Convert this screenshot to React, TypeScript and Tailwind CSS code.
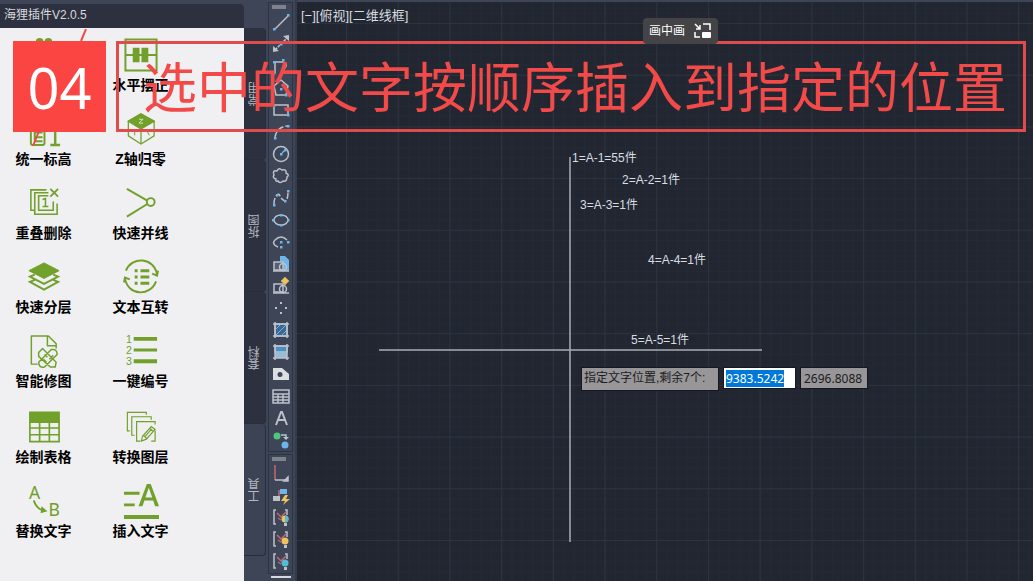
import { useEffect, useRef, type ReactNode } from "react";

type Tool = {
  id: string;
  label: string;
  icon: ReactNode;
};

const G = "#71a02b";
const W = "#bcc2cb";
const B = "#6cb6ea";

const mainTools: Tool[] = [
  {
    id: "align",
    label: "",
    icon: (
      <g fill={G}>
        <circle cx="14" cy="5" r="4" />
        <circle cx="23" cy="5" r="4" />
        <path d="M8 12h20v18H8z" />
      </g>
    ),
  },
  {
    id: "level",
    label: "水平摆正",
    icon: (
      <g fill="none" stroke={G} strokeWidth="2">
        <path d="M2.5 2.5h32v32h-32zM2 6h33M2 18.5h33" />
        <path d="M11 12h5v13h-5zM20 12h5v13h-5z" fill={G} />
      </g>
    ),
  },
  {
    id: "elevation",
    label: "统一标高",
    icon: (
      <g fill="none" stroke={G} strokeWidth="2">
        <path d="M5 6v27q0 2 2 2h10q2 0 2-2V16M9 22h8M9 27h8M9 31h8M9 18v13" />
        <path d="M26 20l4-3v18M25 35h10" strokeWidth="2.5" />
      </g>
    ),
  },
  {
    id: "zero-z",
    label: "Z轴归零",
    icon: (
      <g fill="none" stroke={G} strokeWidth="1.3">
        <path d="M18.500 3 5.500 10.500v15L18.500 34l13.500-8.500v-15z" />
        <path d="M18.500 3 5.500 10.500l13 8 13.500-8z" fill={G} />
        <path d="M18.500 18.500V34" />
        <path d="M12 21v4M25 21l2 4" strokeWidth="1" />
        <path d="M16.500 8.500h4l-4 4h4" stroke="#d8e8be" strokeWidth="1" />
      </g>
    ),
  },
  {
    id: "dedupe",
    label: "重叠删除",
    icon: (
      <g fill="none" stroke={G} strokeWidth="1.600">
        <path d="M21 5H5v21h4M23 8H9v22h23V19M23 11H13v15h15V17" />
        <path d="M25 4l8 8M33 4l-8 8" strokeWidth="1.800" />
        <path d="M17 15l3-1v8M17 22h6" />
      </g>
    ),
  },
  {
    id: "merge-lines",
    label: "快速并线",
    icon: (
      <g fill="none" stroke={G} strokeWidth="2">
        <path d="M4 4l21 12M4 32.500l21-13" />
        <circle cx="28.500" cy="17.500" r="4" />
      </g>
    ),
  },
  {
    id: "layers",
    label: "快速分层",
    icon: (
      <g fill="none" stroke={G} strokeWidth="2">
        <path d="M18.500 4 3 12l15.500 8L34 12z" fill={G} strokeWidth="1" />
        <path d="M9 16l-5 2 14.500 7.500L33 18l-5-2M9 21.500l-5 2 14.500 8L33 23.500l-5-2" />
      </g>
    ),
  },
  {
    id: "text-convert",
    label: "文本互转",
    icon: (
      <g fill="none" stroke={G} strokeWidth="2">
        <path d="M3 12C9-3 32-2 35 16M34 23C28 39 5 38 2 20" />
        <path d="M30 15l5 2 1-5M7 21l-5-2-1 5" />
        <path d="M12 12h3M18 12h9M12 18.500h3M18 18.500h9M12 25h3M18 25h9" strokeWidth="3" />
      </g>
    ),
  },
  {
    id: "smart-fix",
    label: "智能修图",
    icon: (
      <g fill="none" stroke={G} strokeWidth="1.500" strokeLinejoin="round">
        <path d="M12 32H5.500V3H23l8 8v5M22 3v10h9" />
        <path d="M13 20l4-4 14 14-1 5h-5L13 24zM26 17q6-1 6 5L19 35q-6 1-6-5zM22 25l-3-3M24 27l4-4M18 27l3 3" />
      </g>
    ),
  },
  {
    id: "numbering",
    label: "一键编号",
    icon: (
      <g fill={G}>
        <path d="M11 4h24v4H11zM11 16h24v3H11zM11 27h24v4H11z" />
        <g fontSize="11" fontFamily="Liberation Sans, sans-serif">
          <text x="3" y="10">1</text>
          <text x="3" y="22">2</text>
          <text x="3" y="33">3</text>
        </g>
      </g>
    ),
  },
];

const drawTools: Tool[] = [
  {
    id: "table",
    label: "绘制表格",
    icon: (
      <g fill="none" stroke={G} strokeWidth="1.700">
        <path d="M4 3.500h30v10H4z" fill={G} />
        <path d="M4 13v20.500h30V13M4 19.500h30M4 26.500h30M14 13v20M24 13v20" />
      </g>
    ),
  },
  {
    id: "convert-layer",
    label: "转换图层",
    icon: (
      <g fill="none" stroke={G} strokeWidth="1.200">
        <path d="M24 6V3.500H4.500v19H7M29 11V8H9v19h3M33 22v11h-4M18 33h-4V13h19v3" />
        <path d="M19 33l1-5 9-10 4 3-9 10zM21 27l4 4M28 20l3 3M23 28l6-7" />
      </g>
    ),
  },
  {
    id: "replace-text",
    label: "替换文字",
    icon: (
      <g fill={G}>
        <g fontSize="18" fontFamily="Noto Sans, sans-serif">
          <text x="3" y="16">A</text>
          <text x="23" y="34">B</text>
        </g>
        <path d="M8 18q3 9 10 10" fill="none" stroke={G} strokeWidth="2" />
        <path d="M16 24l6 5-7 2z" />
      </g>
    ),
  },
  {
    id: "insert-text",
    label: "插入文字",
    icon: (
      <g fill={G}>
        <path d="M1 9h16v3H1zM1 21h11v3H1zM1 33h36v4H1z" />
        <path d="M16 24 24.500 1h4L37 24h-4l-2-6h-9l-2 6zM23 15h7l-3.500-10z" fillRule="evenodd" />
      </g>
    ),
  },
];

const dots = (points: number[][]) =>
  points.map(([x, y]) => (
    <rect key={`${x}-${y}`} x={x - 1} y={y - 1} width="2.500" height="2.500" fill={B} stroke="none" />
  ));

const dimension = (color: string, half?: string) => (
  <>
    <path d="M5 2H3v14h2M14 2h2v5" />
    <path d="M6 5l4 4 5-5M7 10l3 2" stroke="#c06a70" />
    <circle cx="14" cy="11" r="3.500" fill={color} stroke="none" />
    {half && <path d="M14 7.500a3.500 3.500 0 0 1 0 7z" fill={half} stroke="none" />}
    <path d="M13 15h3v3h-3z" fill={W} stroke="none" />
  </>
);

const drawBar: Tool[] = [
  { id: "line", label: "直线", icon: <><path d="M4 17 17 4" />{dots([[3, 17], [17, 3]])}</> },
  { id: "xline", label: "构造线", icon: <><path d="M4 16 16 4" strokeDasharray="3 1" /><path d="M2 18v-6l6 5zM18 1v6l-6-5z" fill={W} stroke="none" />{dots([[10, 10]])}</> },
  { id: "pline", label: "多段线", icon: <><path d="M4 17V6h8q6 2 1 7" />{dots([[3, 17], [3, 6], [12, 4]])}</> },
  { id: "polygon", label: "多边形", icon: <><path d="M10 2l7 6-2 9H5L3 8z" />{dots([[10, 11], [15, 17]])}</> },
  { id: "rect", label: "矩形", icon: <><path d="M3 5h14v10H3z" />{dots([[3, 5], [17, 15]])}</> },
  { id: "arc", label: "圆弧", icon: <><path d="M4 15Q6 5 16 4" strokeDasharray="6 2" />{dots([[4, 16], [8, 8], [17, 4]])}</> },
  { id: "circle", label: "圆", icon: <><circle cx="10" cy="10" r="7.500" />{dots([[10, 10], [14, 6]])}<path d="M11 9l3-3" stroke={B} /></> },
  { id: "cloud", label: "修订云线", icon: <path d="M5 13q-4-1-2-4-2-5 3-4 2-4 5-1 5-1 4 3 4 2 1 4 0 5-4 4-3 3-5 0-3 1-2-2z" /> },
  { id: "spline", label: "样条曲线", icon: <><path d="M3 16q0-6 3-9 2-2 3 1t5 5q3-1 3-9" strokeDasharray="6 2" />{dots([[3, 17], [6, 7], [14, 13], [17, 3]])}</> },
  { id: "ellipse", label: "椭圆", icon: <><ellipse cx="10" cy="10" rx="7" ry="5" />{dots([[2, 10], [17, 10], [10, 5], [10, 15]])}</> },
  { id: "ellipse-arc", label: "椭圆弧", icon: <><path d="M7 15q-7-3-3-7 6-6 12 0" />{dots([[10, 10], [10, 15], [17, 10]])}</> },
  { id: "insert", label: "插入块", icon: <><path d="M9 2h5l4 4v11H9z" fill={B} stroke="none" /><path d="M3 8h9v8H3z" fill="#565f6e" /><circle cx="12" cy="13" r="3.500" /><path d="M2 17h16" /></> },
  { id: "block", label: "创建块", icon: <><path d="M3 8h9v8H3z" /><circle cx="12" cy="13" r="3.500" /><path d="M2 17h16" /><circle cx="14" cy="5" r="3" fill="#efc15f" stroke="none" /><path d="M14 1v8M10 5h8" stroke="#efc15f" /></> },
  { id: "point", label: "点", icon: <path d="M9 5h2M9 15h2M4 10h2M14 10h2" strokeWidth="2" /> },
  { id: "hatch", label: "图案填充", icon: <><path d="M4 4h12v12H4z" fill="#3d6991" /><path d="M4 10l6-6M4 16 16 4M10 16l6-6" stroke={B} strokeWidth="1" /><path d="M4 2v16M16 2v16M2 4h16M2 16h16" /></> },
  { id: "gradient", label: "渐变色", icon: <><path d="M4 4h12v6H4z" fill="#4790c8" /><path d="M4 10h12v6H4z" fill="#9abbd5" stroke="none" /><path d="M4 2v16M16 2v16M2 4h16M2 16h16" /></> },
  { id: "region", label: "面域", icon: <path fillRule="evenodd" d="M2 4h9l7 6v6H2zM9 8a2.500 2.500 0 1 0 0 5 2.500 2.500 0 1 0 0-5z" fill="#dcdee2" stroke="none" /> },
  { id: "grid", label: "表格", icon: <path d="M2 4h16v13H2zM2 8h16M2 11h16M2 14h16M7 8v9M12 8v9" /> },
  { id: "mtext", label: "多行文字", icon: <path d="M5 17 10 4h1l5 13M7 12h7" strokeWidth="2" /> },
  { id: "add", label: "添加选定对象", icon: <><circle cx="6" cy="6" r="3.500" fill="#4fc67c" stroke="none" /><circle cx="14" cy="15" r="3.500" fill={B} stroke="none" /><path d="M10 5h5v4" /><path d="M12 7h6l-3 3z" fill={W} stroke="none" /></> },
];

const constraintBar: Tool[] = [
  { id: "ucs", label: "坐标系", icon: <><path d="M4 1v15" stroke="#c06a70" /><path d="M4 16h13" /><path d="M17 13v4h-4z" fill={W} /></> },
  { id: "auto", label: "自动约束", icon: <><path d="M9 3h7v5H9z" fill={B} stroke="none" /><path d="M2 10h7v5H2z" fill={W} stroke="none" /><path d="M8 10V4" stroke="#c06a70" /><path d="M14 9l-4 6h4l-2 4 7-6h-4l2-4z" fill="#efc15f" stroke="none" /></> },
  { id: "dim-auto", label: "智能标注", icon: dimension("#efc15f", "#54bcd5") },
  { id: "dim-lock", label: "锁定标注", icon: dimension("#efc15f") },
  { id: "dim-view", label: "显示标注", icon: dimension("#54bcd5") },
];

const tabs = ["常用", "拆图", "套料", "工具"];

const annotations = [
  { text: "1=A-1=55件", x: 275, y: 160 },
  { text: "2=A-2=1件", x: 325, y: 182 },
  { text: "3=A-3=1件", x: 283, y: 207 },
  { text: "4=A-4=1件", x: 351, y: 262 },
  { text: "5=A-5=1件", x: 334, y: 342 },
];

function ToolGrid({ tools }: { tools: Tool[] }) {
  return (
    <div className="grid grid-cols-[97px_97px]">
      {tools.map((tool) => (
        <button
          key={tool.id}
          type="button"
          aria-label={tool.label || "对齐"}
          className="flex flex-col items-center gap-0.5"
        >
          <svg viewBox="0 0 37 37" className="size-9 overflow-visible">
            {tool.icon}
          </svg>
          <span className="h-5 text-sm leading-5 font-bold text-black">{tool.label}</span>
        </button>
      ))}
    </div>
  );
}

function Plugin() {
  return (
    <aside className="flex w-[244px] shrink-0 flex-col pt-1">
      <h1 className="h-6 rounded-tr bg-[#2d313f] pl-1 text-xs leading-[22px] text-[#d8dade]">
        海狸插件V2.0.5
      </h1>
      <div className="flex-1 bg-[#f0eff1] pt-[9px]">
        <div className="-ml-[5px] flex flex-col gap-[18px] [&>div]:gap-y-4">
          <ToolGrid tools={mainTools} />
          <ToolGrid tools={drawTools} />
        </div>
      </div>
    </aside>
  );
}

function TabStrip() {
  return (
    <div role="tablist" aria-orientation="vertical" className="flex w-6 shrink-0 flex-col pt-7 pr-0.5">
      {tabs.map((tab) => (
        <button
          key={tab}
          type="button"
          role="tab"
          aria-selected={tab === "工具"}
          className="flex h-[132px] items-center justify-center rounded-r border-r border-b border-[#272d3a] bg-[#2d313f] text-xs text-[#b4b8c0] aria-selected:bg-[#3b4354]"
        >
          <span className="rotate-180 [writing-mode:vertical-rl]">{tab}</span>
        </button>
      ))}
    </div>
  );
}

function ToolBar({ tools }: { tools: Tool[] }) {
  return (
    <div role="toolbar" className="flex flex-col items-center border border-[#2c3342] pt-0.5">
      <div className="mr-1 mb-0.5 h-1 w-3.5 bg-[#7d838e]" />
      {tools.map((tool) => (
        <button
          key={tool.id}
          type="button"
          aria-label={tool.label}
          className="flex h-[22px] w-6 items-center justify-center"
        >
          <svg viewBox="0 0 20 20" className="size-5" fill="none" stroke={W} strokeWidth="1.500">
            {tool.icon}
          </svg>
        </button>
      ))}
    </div>
  );
}

function CoordinatePrompt() {
  const xRef = useRef<HTMLInputElement>(null);

  useEffect(() => {
    xRef.current?.focus();
    xRef.current?.select();
  }, []);

  return (
    <div className="absolute top-[365px] left-[284px] flex items-start gap-1 text-xs">
      <label
        htmlFor="coord-x"
        className="h-6 w-[138px] border border-[#15181f] bg-[#989699] pl-0.5 leading-5 whitespace-nowrap text-[#1b1c20]"
      >
        指定文字位置,剩余7个:
      </label>
      <input
        id="coord-x"
        ref={xRef}
        defaultValue="9383.5242"
        className="h-[22px] w-[73px] border border-[#15181f] bg-white px-0.5 font-['Noto_Sans',sans-serif] text-black outline-none selection:bg-[#0078d7] selection:text-white"
      />
      <input
        aria-label="Y"
        defaultValue="2696.8088"
        className="h-[22px] w-[68px] border border-[#15181f] bg-[#989699] px-[3px] font-['Noto_Sans',sans-serif] text-[#1b1c20] outline-none"
      />
    </div>
  );
}

function Drawing() {
  return (
    <main className="relative mt-0.5 min-w-0 flex-1 overflow-hidden bg-[#212631]">
      <svg className="absolute inset-0 size-full">
        <defs>
          <pattern id="minor" width="10.340" height="10.340" x="49" y="21" patternUnits="userSpaceOnUse">
            <path d="M.5 0v11M0 .5h11" fill="none" stroke="#242a35" />
          </pattern>
          <pattern id="major" width="51.700" height="51.700" x="49" y="21" patternUnits="userSpaceOnUse">
            <path d="M.5 0v52M0 .5h52" fill="none" stroke="#2c333f" />
          </pattern>
        </defs>
        <rect width="100%" height="100%" fill="url(#minor)" />
        <rect width="100%" height="100%" fill="url(#major)" />
        <path d="M273 155v385M82 348h383" stroke="#a9afb4" strokeWidth="1.500" />
        <g fill="#d9dce0" className="text-xs">
          {annotations.map((item) => (
            <text key={item.text} x={item.x} y={item.y}>
              {item.text}
            </text>
          ))}
        </g>
      </svg>
      <p className="relative pt-1 pl-1 text-[13px] leading-5 text-[#d9dce0]">[−][俯视][二维线框]</p>
      <CoordinatePrompt />
    </main>
  );
}

function Banner() {
  return (
    <div className="pointer-events-none absolute inset-x-0 top-[41px] flex gap-2.5 pr-[7px] pl-[13px] text-[#f24a48]">
      <svg className="absolute -top-3 left-0 h-32 w-24" stroke="currentColor" strokeWidth="2">
        <path d="M86 0 81 12M39 102 33 117" />
      </svg>
      <div className="relative flex h-[91px] w-[93px] shrink-0 items-center justify-center bg-[#fa4542] font-['Noto_Sans',sans-serif] text-[56px] text-white">
        04
      </div>
      <div className="flex h-[91px] flex-1 items-center justify-center border-3 border-[#e04b4c] pt-1 pl-2 text-[54px] leading-none whitespace-nowrap">
        选中的文字按顺序插入到指定的位置
      </div>
    </div>
  );
}

function PipButton() {
  return (
    <button
      type="button"
      className="absolute top-[18px] left-[643px] flex h-[26px] w-[75px] items-center justify-between rounded bg-[#444446] px-1.5 text-xs text-white"
    >
      画中画
      <svg viewBox="0 0 18 16" className="h-4 w-[18px]" fill="none" stroke="white" strokeWidth="1.500">
        <path d="M1 1l5 5M6 2v4H2M9 1h7v6M1 9v5h5" />
        <rect x="8" y="9" width="9" height="6" rx="1" fill="white" stroke="none" />
      </svg>
    </button>
  );
}

export default function App() {
  return (
    <div className="relative flex min-h-screen overflow-hidden bg-[#3d4556] font-['Liberation_Sans','Noto_Sans_CJK_SC',sans-serif]">
      <Plugin />
      <TabStrip />
      <div className="flex w-[29px] shrink-0 flex-col gap-0.5 border-r-2 border-[#343c4b] pt-0.5 pr-0.5">
        <ToolBar tools={drawBar} />
        <ToolBar tools={constraintBar} />
        <div className="mx-auto h-0.5 w-5 bg-[#d6dade]" />
      </div>
      <Drawing />
      <Banner />
      <PipButton />
    </div>
  );
}
